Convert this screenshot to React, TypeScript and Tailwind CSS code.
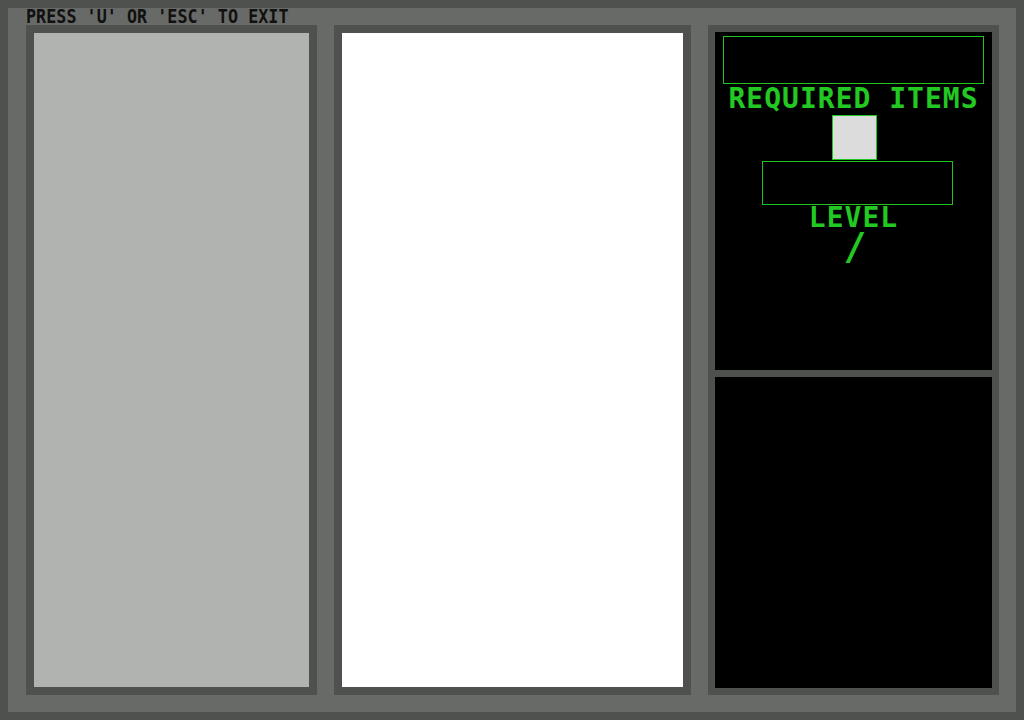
import React from "react";

const mono = { fontFamily: '"DejaVu Sans Mono", "Liberation Mono", monospace' };

export default function App() {
  return (
    <div className="w-[1024px] h-[720px] bg-[#4f514f] p-[8px]">
      <div className="w-full h-full bg-[#686a68] flex flex-col">
        <div className="h-[17px] relative">
          <div
            className="absolute left-[18px] top-[-1px] text-[16.7px] leading-[17px] font-bold text-[#111111] whitespace-pre tracking-[0.05px] scale-y-[1.12] origin-top"
            style={mono}
          >
            PRESS 'U' OR 'ESC' TO EXIT
          </div>
        </div>
        <div className="flex flex-row pl-[18px] gap-[17px] h-[670px]">
          <div className="w-[291px] h-full border-[8px] border-[#4f514f] bg-[#b1b3b1]" />
          <div className="w-[357px] h-full border-[8px] border-[#4f514f] bg-white" />
          <div className="w-[291px] h-full border-[7px] border-[#4f514f] bg-black flex flex-col">
            <div className="h-[338px] flex flex-col items-center">
              <div className="mt-[4px] w-[261px] h-[48px] border border-[#1fc41f]" />
              <div
                className="mt-[1px] h-[28px] text-[28px] leading-[28px] font-bold text-[#22c922] tracking-[1px] whitespace-pre"
                style={mono}
              >
                REQUIRED ITEMS
              </div>
              <div className="mt-[2px] w-[45px] h-[45px] border border-[#1fc41f] bg-[#dcdcdc] ml-[2px]" />
              <div className="mt-[1px] w-[191px] h-[44px] border border-[#1fc41f] ml-[8px]" />
              <div
                className="mt-[3px] h-[20px] text-[28px] leading-[20px] font-bold text-[#22c922] tracking-[1px] whitespace-pre"
                style={mono}
              >
                LEVEL
              </div>
              <div
                className="mt-[2px] h-[32px] text-[38px] leading-[32px] font-bold text-[#22c922] ml-[3px]"
                style={mono}
              >
                /
              </div>
            </div>
            <div className="h-[7px] bg-[#4f514f]" />
            <div className="flex-1" />
          </div>
        </div>
      </div>
    </div>
  );
}
